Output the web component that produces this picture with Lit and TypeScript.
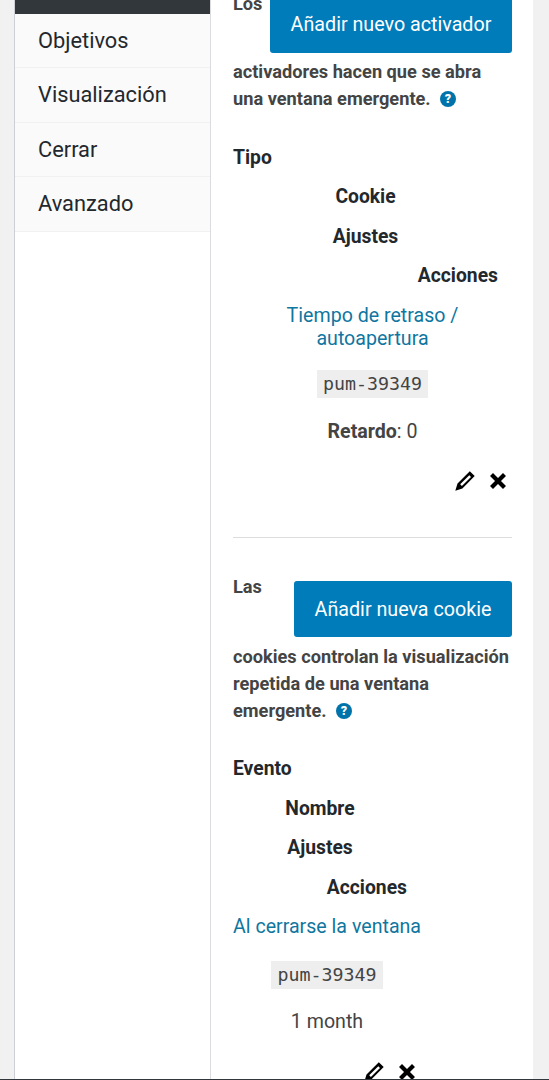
import { LitElement, html, css } from "lit";
import { customElement } from "lit/decorators.js";

const pencil = html`<svg class="ic" width="20" height="20" viewBox="0 0 20 20"><path fill="#000" fill-rule="evenodd" d="M14.8 0.3 19.7 5 7.4 17.4 0.3 19.8 2.5 12.6ZM14.3 4.2 5.2 13.2 6.9 14.9 16 5.9Z"/></svg>`;
const cross = html`<svg class="ic" width="16" height="16" viewBox="0 0 16 16"><path fill="none" stroke="#000" stroke-width="4.2" stroke-linecap="square" d="M3 3 13 13M13 3 3 13"/></svg>`;
const help = html`<svg class="help" width="16" height="16" viewBox="0 0 16 16"><circle cx="8" cy="8" r="8" fill="#0073aa"/><text x="8" y="12.4" text-anchor="middle" fill="#fff" font-family="Roboto" font-weight="900" font-size="12.5">?</text></svg>`;

@customElement("app-root")
export class AppRoot extends LitElement {
  static styles = css`
    :host { display: block; height: 1080px; overflow: hidden; background: #f1f1f1; font-family: Roboto, sans-serif; color: #444; }
    .panel { margin-left: 14px; width: 519px; height: 1079px; display: flex; overflow: hidden; background: #fff; border-left: 1px solid #ccd0d4; box-sizing: border-box; }
    .foot { height: 1px; background: #32373c; }
    .side { width: 196px; flex: none; border-right: 1px solid #dcdcde; box-sizing: border-box; }
    .top { height: 13.5px; background: #32373c; }
    .tab { height: 54.5px; box-sizing: border-box; padding-left: 23px; display: flex; align-items: center; font-size: 21.8px; color: #23282d; background: #fafafa; border-bottom: 1px solid #f1f1f1; }
    .main { flex: 1; padding: 0 21px 0 22px; min-width: 0; margin-top: -3px; }
    .lead { font-size: 18.2px; font-weight: 700; line-height: 27px; color: #444; }
    .lead-row { display: flex; justify-content: space-between; align-items: flex-start; }
    .los { margin-top: -7px; }
    .las { margin-top: -8.5px; }
    .after { margin-top: 5.75px; }
    .btn { background: #007cba; color: #fff; font-size: 19.7px; font-weight: 400; border-radius: 3px; height: 55.5px; display: flex; align-items: center; justify-content: center; box-sizing: border-box; }
    .b1 { width: 242px; }
    .b2 { width: 218px; }
    .help { vertical-align: -2px; margin-left: 5px; }
    .lab { height: 39.5px; line-height: 39.5px; font-size: 19.3px; font-weight: 700; color: #23282d; box-sizing: border-box; padding-right: 14px; }
    .c { text-align: center; }
    .r { text-align: right; }
    .val { text-align: center; font-size: 19.6px; line-height: 23px; color: #444; }
    .link { color: #0f76a0; margin-top: 8px; }
    .codewrap { display: flex; justify-content: center; }
    code { font-family: "DejaVu Sans Mono", monospace; font-size: 18.3px; background: #eeeeee; padding: 0 6px; height: 28px; line-height: 28px; display: block; color: #444; }
    .acts { display: flex; justify-content: flex-end; align-items: center; gap: 15px; padding-right: 6px; height: 20px; margin-top: 28.5px; }
    .ic { display: block; }
    hr { border: 0; border-top: 1px solid #ddd; margin: 46px 0 0; }
    .w1 { width: 279px; margin-top: 25.5px; }
    .w2 { width: 188px; margin-top: 25.75px; }
    .second { margin-top: 43px; }
    .m1 { margin-top: 20.5px; }
    .m2 { margin-top: 21.5px; }
    .m3 { margin-top: 22.5px; }
    .nowrap { white-space: nowrap; }
  `;
  render() {
    return html`
      <div class="panel">
        <div class="side">
          <div class="top"></div>
          <div class="tab">Objetivos</div>
          <div class="tab">Visualización</div>
          <div class="tab">Cerrar</div>
          <div class="tab">Avanzado</div>
        </div>
        <div class="main">
          <div class="lead lead-row"><span class="los">Los</span><div class="btn b1">Añadir nuevo activador</div></div>
          <div class="lead after">activadores hacen que se abra<br />una ventana emergente. ${help}</div>

          <div class="w1">
            <div class="lab">Tipo</div>
            <div class="lab c">Cookie</div>
            <div class="lab c">Ajustes</div>
            <div class="lab r">Acciones</div>
            <div class="val link">Tiempo de retraso /<br />autoapertura</div>
            <div class="codewrap m1"><code>pum-39349</code></div>
            <div class="val m2"><b>Retardo</b>: 0</div>
            <div class="acts">${pencil}${cross}</div>
          </div>

          <hr />

          <div class="lead lead-row second"><span class="las">Las</span><div class="btn b2">Añadir nueva cookie</div></div>
          <div class="lead after">cookies controlan la visualización<br />repetida de una ventana<br />emergente. ${help}</div>

          <div class="w2">
            <div class="lab nowrap">Evento</div>
            <div class="lab c">Nombre</div>
            <div class="lab c">Ajustes</div>
            <div class="lab r">Acciones</div>
            <div class="val link nowrap">Al cerrarse la ventana</div>
            <div class="codewrap m3"><code>pum-39349</code></div>
            <div class="val m2">1 month</div>
            <div class="acts">${pencil}${cross}</div>
          </div>
        </div>
      </div>
      <div class="foot"></div>
    `;
  }
}
